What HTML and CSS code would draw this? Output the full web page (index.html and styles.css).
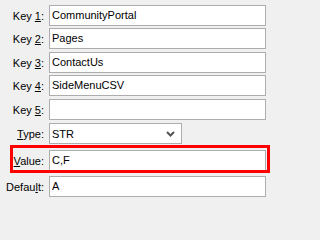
FILE: index.html
```html
<!DOCTYPE html>
<html>
<head>
<meta charset="utf-8">
<link rel="stylesheet" href="styles.css">
</head>
<body>
<div class="form">
  <div class="row r1"><label class="lbl">Key <u>1</u>:</label><div class="field">CommunityPortal</div></div>
  <div class="row r2"><label class="lbl">Key <u>2</u>:</label><div class="field">Pages</div></div>
  <div class="row r3"><label class="lbl">Key <u>3</u>:</label><div class="field">ContactUs</div></div>
  <div class="row r4"><label class="lbl">Key <u>4</u>:</label><div class="field">SideMenuCSV</div></div>
  <div class="row r5"><label class="lbl">Key <u>5</u>:</label><div class="field"></div></div>
  <div class="row r6"><label class="lbl"><u>T</u>ype:</label><div class="select"><span class="sel-text">STR</span><svg class="chev" width="9" height="6" viewBox="0 0 9 6"><polyline points="1,1 4.5,4.5 8,1" fill="none" stroke="#555" stroke-width="2"/></svg></div></div>
  <div class="row r7 highlight"><label class="lbl"><u>V</u>alue:</label><div class="field">C,F</div></div>
  <div class="row r8"><label class="lbl">Defau<u>l</u>t:</label><div class="field">A</div></div>
</div>
</body>
</html>
```
FILE: styles.css
```css
html, body {
  margin: 0;
  padding: 0;
  background: #f0f0f0;
}
body {
  width: 271px;
  height: 202px;
  overflow: hidden;
  font-family: "Liberation Sans", Arial, sans-serif;
  font-size: 11px;
  color: #000;
}
.form {
  display: flex;
  flex-direction: column;
  padding: 5px 5px 0 4px;
}
.row {
  display: flex;
  align-items: center;
  height: 21px;
  position: relative;
}
.r1, .r3 { margin-bottom: 2px; }
.r2, .r4, .r5 { margin-bottom: 3px; }
.r6 { margin-bottom: 6px; }
.r7 { margin-bottom: 5px; }
.lbl {
  width: 40px;
  margin-right: 5px;
  text-align: right;
  white-space: nowrap;
}
.lbl u { text-decoration-thickness: 1px; text-underline-offset: 1px; }
.field {
  box-sizing: border-box;
  width: 217px;
  height: 21px;
  background: #fff;
  border: 1px solid #adadad;
  padding: 0 2px;
  line-height: 19px;
}
.select {
  box-sizing: border-box;
  width: 133px;
  height: 21px;
  background: #fff;
  border: 1px solid #adadad;
  padding: 0 2px;
  display: flex;
  align-items: center;
  justify-content: space-between;
}
.chev { margin-right: 4px; }
.highlight::after {
  content: "";
  position: absolute;
  left: 6px;
  right: -4px;
  top: -5px;
  bottom: -2px;
  border: 3px solid #f00;
  pointer-events: none;
}
```
